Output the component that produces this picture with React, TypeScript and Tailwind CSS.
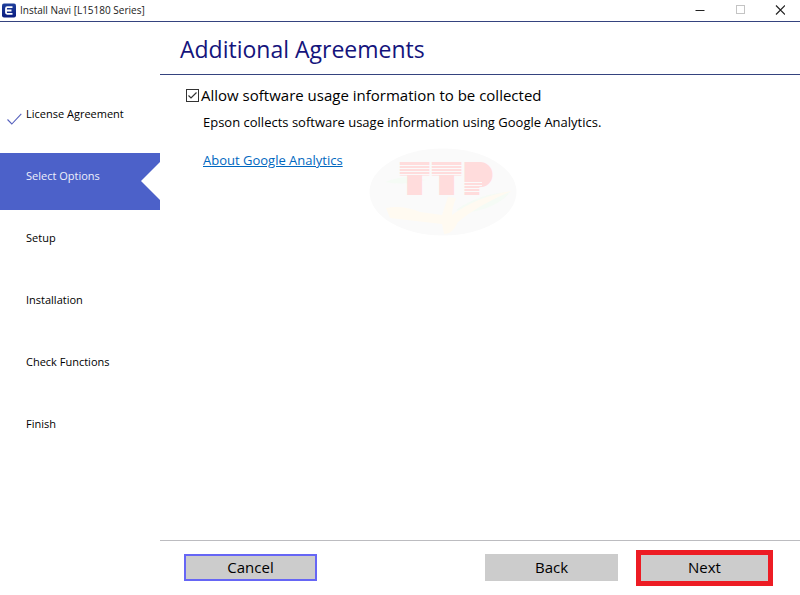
import { useState } from 'react'

const steps = [
  { label: 'License Agreement', state: 'done' },
  { label: 'Select Options', state: 'current' },
  { label: 'Setup', state: 'todo' },
  { label: 'Installation', state: 'todo' },
  { label: 'Check Functions', state: 'todo' },
  { label: 'Finish', state: 'todo' },
]

const TitleBar = () => {
  return (
    <header className="flex h-[22px] items-center border-b border-[#35437f] pl-[2px] pb-px">
      <svg className="h-[15px] w-[14px]" viewBox="0 0 14 15" aria-hidden="true">
        <defs>
          <linearGradient id="app" x1="0" y1="0" x2="0" y2="1">
            <stop offset="0" stopColor="#1e3f9c" />
            <stop offset="1" stopColor="#0a1c80" />
          </linearGradient>
        </defs>
        <rect x="0" y="0.5" width="14" height="14" rx="2" fill="url(#app)" />
        <path d="M10.5 4.2H5.2Q4 4.2 4 5.4V9.6Q4 10.8 5.2 10.8H10.5M4 7.5H9.5" fill="none" stroke="#fff" strokeWidth="1.8" />
      </svg>
      <span className="ml-1 text-[10px] text-[#1a1a1a]">Install Navi [L15180 Series]</span>
      <div className="ml-auto flex h-full">
        <button className="flex w-10 items-center justify-center" aria-label="Minimize">
          <svg className="h-[10px] w-[10px]" viewBox="0 0 10 10">
            <path d="M0.5 5.5H9.5" stroke="#222" />
          </svg>
        </button>
        <button className="flex w-10 items-center justify-center" aria-label="Maximize" disabled>
          <svg className="h-[10px] w-[10px]" viewBox="0 0 10 10">
            <rect x="1.5" y="0.5" width="8" height="8" fill="none" stroke="#c4c4c4" />
          </svg>
        </button>
        <button className="flex w-10 items-center justify-center" aria-label="Close">
          <svg className="h-[10px] w-[10px]" viewBox="0 0 10 10">
            <path d="M1 0.5L10 9.5M10 0.5L1 9.5" stroke="#222" strokeWidth="1.2" />
          </svg>
        </button>
      </div>
    </header>
  )
}

const Sidebar = () => {
  return (
    <nav className="w-40 shrink-0 pt-[69px]">
      <ol className="flex flex-col gap-[5px] text-[11px] leading-[18px]">
        {steps.map((step) => (
          <li
            key={step.label}
            className={
              step.state === 'current'
                ? 'relative h-[57px] bg-[#4c61c9] pl-[26px] pt-[14px] text-[#eef0fb]'
                : 'relative h-[57px] pl-[26px] pt-[14px] text-black'
            }
          >
            {step.state === 'done' && (
              <svg className="absolute left-[7px] top-[22px] h-3 w-[15px]" viewBox="0 0 15 12">
                <path d="M0.5 6.5L4.8 11L14.3 0.8" fill="none" stroke="#5560bd" strokeWidth="1.1" />
              </svg>
            )}
            {step.label}
            {step.state === 'current' && (
              <svg className="absolute right-0 top-[9px] h-[38px] w-[19px]" viewBox="0 0 19 38">
                <path d="M19 0L0 19L19 38Z" fill="#fff" />
              </svg>
            )}
          </li>
        ))}
      </ol>
    </nav>
  )
}

const Watermark = () => {
  return (
    <svg className="absolute left-[208px] top-[73px] h-[90px] w-[150px]" viewBox="0 0 150 90" aria-hidden="true">
      <ellipse cx="75" cy="44" rx="73.5" ry="43.5" fill="#fafafa" />
      <path d="M17 34Q40 25 58 32Q38 38 17 34ZM88 62Q112 45 142 44Q130 60 98 65Z" fill="#f5fbf5" />
      <path d="M18 60Q35 57 52 64L74 67L80 49L88 50Q84 60 84 67Q110 48 144 43Q112 56 90 74Q84 87 76 86L74 76L22 70Z" fill="#fffaf1" />
      <g fill="#ffdcdc" stroke="#ffdcdc" strokeWidth="8" fontFamily="Inter, sans-serif" fontWeight="900" fontSize="34">
        <text x="35" y="43">T</text>
        <text x="67" y="43">T</text>
        <text x="99" y="43">P</text>
      </g>
      <path d="M30 17.5H96M30 20.5H96M30 23.5H96M30 26.5H96M96 34.5H114M96 37.5H114M96 40.5H114M96 43.5H114" stroke="#fafafa" />
    </svg>
  )
}

export default function App() {
  const [allow, setAllow] = useState(true)

  return (
    <div className="flex min-h-screen flex-col bg-white font-['Open_Sans',sans-serif] text-black">
      <TitleBar />
      <div className="flex flex-1">
        <Sidebar />
        <main className="flex flex-1 flex-col">
          <h1 className="h-[53px] border-b border-[#35437f] pl-5 text-[23px] leading-[54px] text-[#14147c]">
            Additional Agreements
          </h1>
          <section className="relative flex-1 pl-[26px] pt-2">
            <Watermark />
            <label className="relative flex h-6 items-center text-[15px]">
              <input
                type="checkbox"
                checked={allow}
                onChange={(e) => setAllow(e.target.checked)}
                className="peer mr-[2px] h-[13px] w-[13px] appearance-none border border-[#333] bg-white"
              />
              <svg className="pointer-events-none absolute left-0 hidden h-[13px] w-[13px] peer-checked:block" viewBox="0 0 13 13">
                <path d="M2.5 6.5L5 9L10.5 3.5" fill="none" stroke="#333" strokeWidth="1.2" />
              </svg>
              Allow software usage information to be collected
            </label>
            <div className="relative pl-[17px] text-[13px] leading-5">
              <p className="mt-[5px]">Epson collects software usage information using Google Analytics.</p>
              <a href="#analytics" className="mt-[18px] inline-block text-[#0067c0] underline">
                About Google Analytics
              </a>
            </div>
          </section>
          <footer className="flex h-[55px] items-start border-t border-[#bcbcc0] pl-6 pr-[27px] pt-[9px] text-[15px]">
            <button className="mt-1 h-[27px] w-[133px] border-2 border-[#6666f5] bg-[#ccc] leading-none">Cancel</button>
            <button className="mt-1 ml-auto h-[27px] w-[133px] bg-[#ccc] leading-none">Back</button>
            <button className="ml-[18px] h-9 w-[137px] border-5 border-[#ed1c24] bg-[#ccc] pb-[2px] leading-none">Next</button>
          </footer>
        </main>
      </div>
    </div>
  )
}
